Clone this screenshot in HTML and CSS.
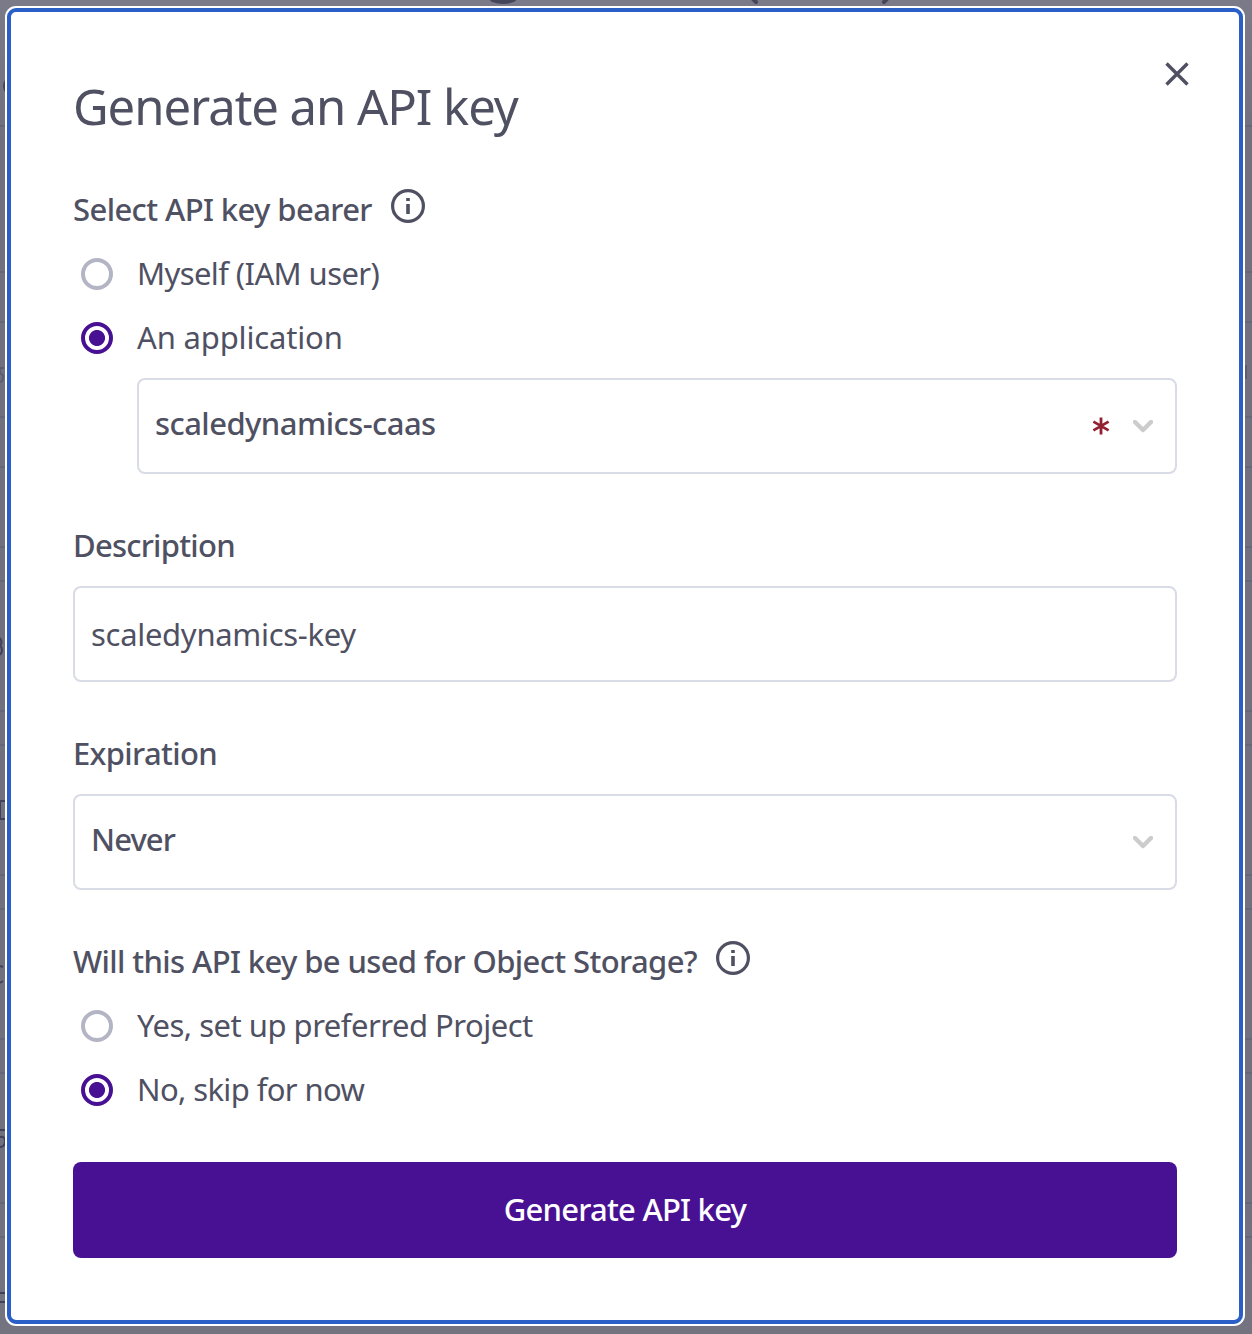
FILE: index.html
```html
<!DOCTYPE html>
<html lang="en">
<head>
<meta charset="utf-8">
<title>Generate an API key</title>
<link rel="stylesheet" href="styles.css">
</head>
<body>
<svg class="backdrop" viewBox="0 0 1252 1334" aria-hidden="true">
  <path class="rule" d="M0 126H1252M0 272H1252M0 322H1252M0 417H1252M0 467H1252M0 547H1252M0 581H1252M0 711H1252M0 745H1252M0 875H1252M0 909H1252M0 1039H1252M0 1073H1252M0 1203H1252M0 1237H1252"/>
  <g class="ink">
    <ellipse cx="503" cy="-2" rx="14" ry="6"/>
    <ellipse cx="6" cy="86" rx="3" ry="6"/>
    <path d="M752-2L756 2M888-2L884 2" class="stroke"/>
    <path d="M0 638Q3 643 0 645Q4 650 0 655M6 801H0V819H6M0 966L3 967M0 983L3 981M0 1130H6M0 1137Q5 1136 5 1141Q5 1147 0 1147M0 1293H6M0 1302H6" class="thin"/>
  </g>
  <path class="faint" d="M4 368H0Q-1 374 3 375Q4 381 0 382M1246 365V379"/>
</svg>
<main class="dialog" role="dialog" aria-labelledby="title">
  <header class="head">
    <h1 id="title" class="title">Generate an API key</h1>
    <button class="close" aria-label="Close"><svg width="24" height="24" viewBox="0 0 24 24"><path d="M1.5 1.5l21 21M22.5 1.5l-21 21"/></svg></button>
  </header>

  <section class="group">
    <div class="label"><span class="t-bearer">Select API key bearer</span>
      <svg class="info" viewBox="0 0 34 34"><circle cx="17" cy="17" r="15.4"/><path d="M15.2 9h3.6v3h-3.6zM15.2 15h3.6v10h-3.6z"/></svg>
    </div>
    <label class="option"><span class="radio"></span><span class="t-myself">Myself (IAM user)</span></label>
    <label class="option"><span class="radio on"></span><span class="t-app">An application</span></label>
  </section>
  <div class="field nested strong">
    <span class="t-caas">scaledynamics-caas</span>
    <span class="marks">
      <svg class="star" width="18" height="18" viewBox="0 0 18 18"><path d="M9 .5v17M1.4 4.6l15.2 8.8M16.6 4.6L1.4 13.4"/></svg>
      <svg class="chevron" width="20" height="13" viewBox="0 0 20 13"><path d="M2 2l8 8 8-8"/></svg>
    </span>
  </div>

  <section class="block">
    <div class="label"><span class="t-desc">Description</span></div>
    <div class="field"><span class="t-key">scaledynamics-key</span></div>
  </section>

  <section class="block">
    <div class="label"><span class="t-exp">Expiration</span></div>
    <div class="field strong"><span class="t-never">Never</span>
      <span class="marks"><svg class="chevron" width="20" height="13" viewBox="0 0 20 13"><path d="M2 2l8 8 8-8"/></svg></span>
    </div>
  </section>

  <section class="group storage">
    <div class="label"><span class="t-storage">Will this API key be used for Object Storage?</span>
      <svg class="info" viewBox="0 0 34 34"><circle cx="17" cy="17" r="15.4"/><path d="M15.2 9h3.6v3h-3.6zM15.2 15h3.6v10h-3.6z"/></svg>
    </div>
    <label class="option"><span class="radio"></span><span class="t-yes">Yes, set up preferred Project</span></label>
    <label class="option"><span class="radio on"></span><span class="t-no">No, skip for now</span></label>
  </section>

  <button class="submit"><span class="t-submit">Generate API key</span></button>
</main>
</body>
</html>
```
FILE: styles.css
```css
* { box-sizing: border-box; }
body {
  margin: 0;
  height: 1334px;
  padding: 8px 9px 10px 7px;
  overflow: hidden;
  background: linear-gradient(#7a7a88, #70707f 10%, #70707f 90%, #747481);
  font-family: "Noto Sans", sans-serif;
  font-size: 31px;
  line-height: 32px;
  color: #4f5163;
}
.backdrop { position: absolute; left: 0; top: 0; width: 1252px; height: 1334px; z-index: -1; }
.rule { stroke: #66667b; stroke-width: 2; }
.ink { fill: #45455a; }
.stroke { stroke: #45455a; stroke-width: 4; stroke-linecap: round; }
.thin { stroke: #40405a; stroke-width: 2; fill: none; }
.faint { stroke: #5c5c70; stroke-width: 2; fill: none; }
.dialog {
  height: 1316px;
  padding: 48px 62px 62px;
  border: 4px solid #2a5fc7;
  border-radius: 9px;
  background: #fff;
  box-shadow: 0 0 0 2px #fff;
}
.head { display: flex; justify-content: space-between; height: 134px; }
.title { margin: 14px 0 0 0; font-size: 49px; font-weight: 400; line-height: 64px; letter-spacing: -1.05px; white-space: nowrap; }
.close { width: 24px; height: 24px; margin: 2px -12px 0 0; padding: 0; border: 0; background: none; }
.close svg { display: block; fill: none; stroke: #4f5163; stroke-width: 3.4; }
.group { display: flex; flex-direction: column; gap: 32px; }
.label { display: flex; align-items: center; gap: 19px; height: 32px; font-weight: 500; white-space: nowrap; }
.label span, .option span:last-child, .field > span:first-child, .submit span { margin-top: -2px; }
.info { width: 34px; height: 34px; margin-top: -8px; fill: #4f5163; }
.info circle { fill: none; stroke: #4f5163; stroke-width: 3.2; }
.option { display: flex; align-items: center; gap: 24px; height: 32px; padding-left: 8px; white-space: nowrap; }
.radio { width: 32px; height: 32px; border: 4px solid #b3b5c4; border-radius: 50%; }
.radio.on { border-color: #481193; background: radial-gradient(circle, #481193 7.6px, #fff 8.4px); }
.field {
  display: flex; align-items: center; justify-content: space-between;
  height: 96px; margin-top: 24px; padding: 2px 22px 0 16px;
  border: 2px solid #d9dbe7; border-radius: 8px;
}
.strong { font-weight: 500; padding-bottom: 5px; padding-top: 0; }
.nested { margin-left: 64px; }
.marks { display: flex; align-items: center; gap: 23px; padding-top: 5px; }
.star { stroke: #92202f; stroke-width: 2.8; fill: none; }
.chevron { stroke: #ccc; stroke-width: 4.5; fill: none; stroke-linecap: round; stroke-linejoin: round; }
.block, .storage { margin-top: 56px; }
.submit {
  display: flex; align-items: center; justify-content: center;
  width: 100%; height: 96px; margin-top: 56px; padding: 0;
  border: 0; border-radius: 8px; background: #481193; color: #fff;
  font: inherit; font-weight: 500;
}
.t-bearer, .t-myself { letter-spacing: -.6px; }
.t-app { letter-spacing: -.16px; }
.t-caas { letter-spacing: -.56px; }
.t-desc { letter-spacing: -.75px; }
.t-key { letter-spacing: -.3px; }
.t-exp { letter-spacing: -.65px; }
.t-never { letter-spacing: -.9px; }
.t-storage, .t-no { letter-spacing: -.62px; }
.t-yes { letter-spacing: -.5px; }
.t-submit { letter-spacing: -.77px; }
```
